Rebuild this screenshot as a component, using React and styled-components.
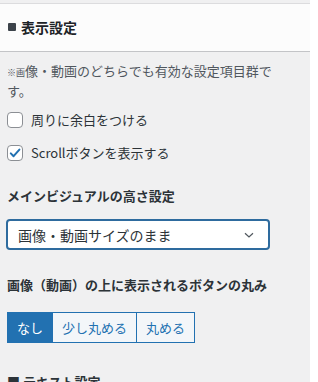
import React from "react"
import styled, { createGlobalStyle } from "styled-components"

const GlobalStyle = createGlobalStyle`
  html, body {
    margin: 0;
    padding: 0;
    background: #ffffff;
    font-family: "Noto Sans CJK JP", "Noto Sans", sans-serif;
    color: #1e1e1e;
  }
`;

const App = () => {
  return (
    <>
      <GlobalStyle />
      <Page>
        <Panel>
          <TopGap />
          <Header>
            <Square />
            <HeaderTitle>表示設定</HeaderTitle>
          </Header>
          <Body>
            <Note>※画像・動画のどちらでも有効な設定項目群です。</Note>
            <CheckRow>
              <Box />
              <CheckLabel>周りに余白をつける</CheckLabel>
            </CheckRow>
            <CheckRow>
              <Box checked>
                <svg width="12" height="12" viewBox="0 0 12 12">
                  <path d="M1.8 6.4 L4.6 9.2 L10.4 2.6" fill="none" stroke="#2271b1" strokeWidth="2" strokeLinecap="round" strokeLinejoin="round" />
                </svg>
              </Box>
              <CheckLabel>Scrollボタンを表示する</CheckLabel>
            </CheckRow>
            <SectionTitle top="23px">メインビジュアルの高さ設定</SectionTitle>
            <Select>
              <SelectText>画像・動画サイズのまま</SelectText>
              <svg width="14" height="14" viewBox="0 0 14 14">
                <path d="M3 5.2 L7 9 L11 5.2" fill="none" stroke="#50575e" strokeWidth="1.2" />
              </svg>
            </Select>
            <SectionTitle top="25px">画像（動画）の上に表示されるボタンの丸み</SectionTitle>
            <Segmented>
              <Segment active>なし</Segment>
              <Segment>少し丸める</Segment>
              <Segment>丸める</Segment>
            </Segmented>
            <SectionTitle top="29px">■ テキスト設定</SectionTitle>
          </Body>
        </Panel>
      </Page>
    </>
  )
};
export default App

const Page = styled.div`
  display: flex;
  width: 318px;
  height: 382px;
  overflow: hidden;
  background: #ffffff;
`;

const Panel = styled.div`
  flex: 0 0 310px;
  display: flex;
  flex-direction: column;
  background: #f0f0f1;
  & > * {
    flex-shrink: 0;
  }
`;

const TopGap = styled.div`
  height: 3px;
  background: #f0f0f1;
  border-bottom: 1px solid #dcdcde;
`;

const Header = styled.div`
  display: flex;
  align-items: center;
  gap: 5px;
  height: 48px;
  padding: 0 8px 2px 8px;
  box-sizing: border-box;
  background: #fcfcfc;
  border-bottom: 1px solid #c3c4c7;
`;

const Square = styled.span`
  width: 8px;
  height: 8px;
  border-radius: 1px;
  background: #3c434a;
`;

const HeaderTitle = styled.span`
  font-size: 14px;
  font-weight: 700;
  color: #1d2327;
`;

const Body = styled.div`
  display: flex;
  flex-direction: column;
  align-items: flex-start;
  padding: 10px 7px 0 7px;
`;

const Note = styled.p`
  margin: 0;
  font-size: 13px;
  line-height: 18px;
  color: #50575e;
  width: 280px;
  &::first-letter {
    font-size: 9px;
  }
`;

const CheckRow = styled.label`
  display: flex;
  align-items: center;
  gap: 8px;
  margin-top: 13px;
  &:first-of-type {
    margin-top: 10px;
  }
`;

const Box = styled.span`
  display: flex;
  align-items: center;
  justify-content: center;
  width: 14px;
  height: 14px;
  border: 1px solid #8c8f94;
  border-radius: 4px;
  background: #ffffff;
`;

const CheckLabel = styled.span`
  font-size: 13px;
  line-height: 20px;
  color: #2c3338;
`;

const SectionTitle = styled.h3`
  margin: ${p => p.top} 0 0 0;
  font-size: 13px;
  line-height: 20px;
  font-weight: 700;
  color: #2c3338;
`;

const Select = styled.div`
  box-sizing: border-box;
  display: flex;
  align-items: center;
  justify-content: space-between;
  width: 264px;
  height: 31px;
  margin-top: 13px;
  margin-left: -1px;
  padding: 0 12px 0 10px;
  border: 2px solid #2e6b9e;
  border-radius: 4px;
  background: #ffffff;
`;

const SelectText = styled.span`
  font-size: 14px;
  color: #2c3338;
`;

const Segmented = styled.div`
  display: flex;
  margin-top: 17px;
`;

const Segment = styled.span`
  box-sizing: border-box;
  height: 31px;
  padding: 0 9px;
  display: flex;
  align-items: center;
  font-size: 13px;
  color: ${p => (p.active ? "#ffffff" : "#2271b1")};
  background: ${p => (p.active ? "#2271b1" : "#f3f6f9")};
  border: 1px solid #2271b1;
  &:not(:first-child) {
    margin-left: -1px;
  }
`;
